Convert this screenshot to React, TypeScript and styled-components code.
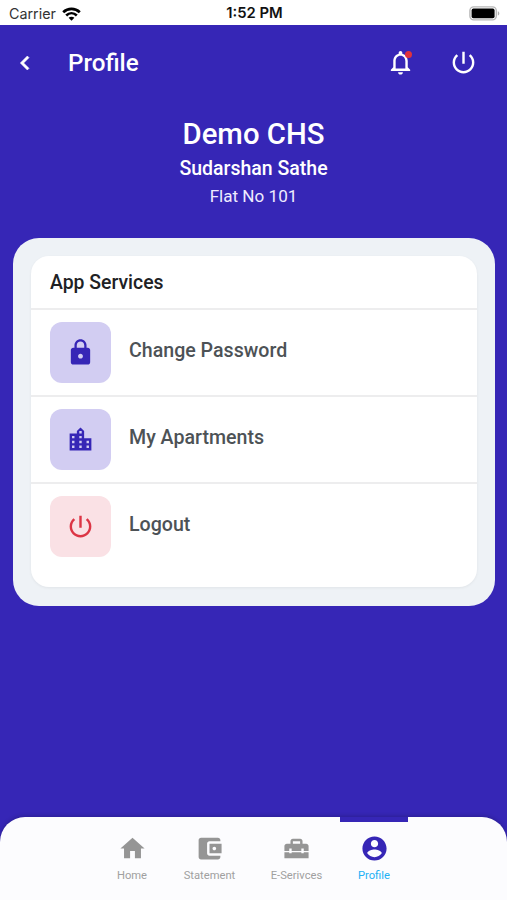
import React from "react";
import styled, { createGlobalStyle } from "styled-components";

const Global = createGlobalStyle`
  * { box-sizing: border-box; }
  body { margin: 0; background: #3626b6; font-family: Roboto, "Liberation Sans", sans-serif; }
`;

const Screen = styled.div`
  width: 507px;
  height: 900px;
  display: flex;
  flex-direction: column;
  background: #3626b6;
  overflow: hidden;
`;

const StatusBar = styled.div`
  height: 25px;
  flex: none;
  display: grid;
  grid-template-columns: 1fr auto 1fr;
  align-items: center;
  padding: 2px 7px 0 9px;
  background: #fff;
  color: #111;
  font-family: Inter, sans-serif;
  font-size: 14.3px;
  line-height: 23px;
`;

const Carrier = styled.div`
  display: flex;
  align-items: center;
  gap: 6px;
  color: #333;
`;

const Clock = styled.div`
  font-weight: 600;
  font-size: 14.8px;
`;

const BatterySlot = styled.div`
  display: flex;
  justify-content: flex-end;
`;

const Header = styled.header`
  height: 75px;
  flex: none;
  display: flex;
  align-items: center;
  padding: 0 29px 0 11px;
  color: #fff;
`;

const Title = styled.h1`
  flex: 1;
  margin: 0 0 0 29px;
  font-size: 24.2px;
  font-weight: 500;
`;

const BellButton = styled.div`
  position: relative;
  display: flex;
  margin-right: 34px;
`;

const Badge = styled.span`
  position: absolute;
  top: 3px;
  right: 3px;
  width: 7px;
  height: 7px;
  border-radius: 50%;
  background: #e0323c;
`;

const Identity = styled.section`
  height: 138px;
  flex: none;
  display: flex;
  flex-direction: column;
  align-items: center;
  padding-top: 14px;
  color: #fff;
`;

const Society = styled.div`
  font-size: 29.3px;
  line-height: 40px;
  font-weight: 500;
`;

const Person = styled.div`
  font-size: 19.5px;
  line-height: 29px;
  font-weight: 500;
`;

const Flat = styled.div`
  font-size: 17.1px;
  line-height: 26px;
  color: #eeecff;
`;

const Panel = styled.section`
  height: 368px;
  flex: none;
  margin: 0 12px 0 13px;
  padding: 18px;
  border-radius: 26px;
  background: #eef2f6;
`;

const Card = styled.div`
  height: 331px;
  border-radius: 18px;
  background: #fff;
  box-shadow: 0 1px 3px rgba(0, 0, 0, 0.06);
`;

const CardTitle = styled.h2`
  height: 52px;
  margin: 0;
  padding-left: 19px;
  font-size: 19.4px;
  line-height: 54px;
  font-weight: 500;
  color: #202124;
`;

const Row = styled.div`
  height: 87px;
  display: flex;
  align-items: flex-start;
  padding: 12px 19px 0;
  border-top: 2px solid #ededee;
`;

const Tile = styled.div<{ $bg: string; $fg: string }>`
  width: 61px;
  height: 61px;
  display: flex;
  align-items: center;
  justify-content: center;
  border-radius: 12px;
  background: ${(p) => p.$bg};
  color: ${(p) => p.$fg};
`;

const RowLabel = styled.div`
  margin-left: 18px;
  font-size: 19.6px;
  line-height: 57px;
  font-weight: 500;
  color: #4d5256;
`;

const TabBar = styled.nav`
  height: 83px;
  flex: none;
  display: flex;
  justify-content: center;
  margin-top: auto;
  padding: 0 12px 0 11px;
  border-radius: 25px 25px 0 0;
  background: #fcfcfe;
  box-shadow: 0 -1px 4px rgba(0, 0, 0, 0.2);
`;

const Tab = styled.div<{ $width: number; $active?: boolean }>`
  width: ${(p) => p.$width}px;
  display: flex;
  flex-direction: column;
  align-items: center;
  border-top: 5px solid ${(p) => (p.$active ? "#3626b6" : "transparent")};
  padding-top: 12px;
  color: ${(p) => (p.$active ? "#3626b6" : "#959595")};
`;

const TabLabel = styled.span<{ $active?: boolean }>`
  margin-top: 5px;
  font-size: 11.2px;
  line-height: 16px;
  color: ${(p) => (p.$active ? "#22b1f5" : "#a0a0a0")};
`;

const paths = {
  back: "M15.41 7.41 14 6l-6 6 6 6 1.41-1.41L10.83 12z",
  bell: "M12 22c1.1 0 2-.9 2-2h-4c0 1.1.9 2 2 2zm6-6v-5c0-3.07-1.63-5.64-4.5-6.32V4c0-.83-.67-1.5-1.5-1.5s-1.5.67-1.5 1.5v.68C7.64 5.36 6 7.92 6 11v5l-2 2v1h16v-1l-2-2zm-2 1H8v-6c0-2.48 1.51-4.5 4-4.5s4 2.02 4 4.5v6z",
  power: "M13 3h-2v10h2V3zm4.83 2.17-1.42 1.42C17.99 7.86 19 9.81 19 12c0 3.87-3.13 7-7 7s-7-3.13-7-7c0-2.19 1.01-4.14 2.58-5.42L6.17 5.17C4.23 6.82 3 9.26 3 12c0 4.97 4.03 9 9 9s9-4.03 9-9c0-2.74-1.23-5.18-3.17-6.83z",
  lock: "M18 8h-1V6c0-2.76-2.24-5-5-5S7 3.24 7 6v2H6c-1.1 0-2 .9-2 2v10c0 1.1.9 2 2 2h12c1.1 0 2-.9 2-2V10c0-1.1-.9-2-2-2zm-6 9c-1.1 0-2-.9-2-2s.9-2 2-2 2 .9 2 2-.9 2-2 2zm3.1-9H8.9V6c0-1.71 1.39-3.1 3.1-3.1s3.1 1.39 3.1 3.1v2z",
  city: "M15 11V5l-3-3-3 3v2H3v14h18V11h-6zm-8 8H5v-2h2v2zm0-4H5v-2h2v2zm0-4H5V9h2v2zm6 8h-2v-2h2v2zm0-4h-2v-2h2v2zm0-4h-2V9h2v2zm0-4h-2V5h2v2zm6 12h-2v-2h2v2zm0-4h-2v-2h2v2z",
  home: "M10 20v-6h4v6h5v-8h3L12 3 2 12h3v8z",
  wallet: "M21 18v1c0 1.1-.9 2-2 2H5c-1.11 0-2-.9-2-2V5c0-1.1.89-2 2-2h14c1.1 0 2 .9 2 2v1h-9c-1.11 0-2 .9-2 2v8c0 1.1.89 2 2 2h9zm-9-2h10V8H12v8zm4-2.5c-.83 0-1.5-.67-1.5-1.5s.67-1.5 1.5-1.5 1.5.67 1.5 1.5-.67 1.5-1.5 1.5z",
  toolbox: "M18 16H16V15H8V16H6V15H2V20H22V15H18V16M20 8H17V6C17 4.9 16.1 4 15 4H9C7.9 4 7 4.9 7 6V8H4C2.9 8 2 8.9 2 10V14H6V12H8V14H16V12H18V14H22V10C22 8.9 21.1 8 20 8M15 8H9V6H15V8Z",
  account: "M12 2C6.48 2 2 6.48 2 12s4.48 10 10 10 10-4.48 10-10S17.52 2 12 2zm0 3c1.66 0 3 1.34 3 3s-1.34 3-3 3-3-1.34-3-3 1.34-3 3-3zm0 14.2c-2.5 0-4.71-1.28-6-3.22.03-1.99 4-3.08 6-3.08 1.99 0 5.97 1.09 6 3.08-1.29 1.94-3.5 3.22-6 3.22z",
};

type IconName = keyof typeof paths;

const Icon = ({ name, size, stroke = 0 }: { name: IconName; size: number; stroke?: number }) => (
  <svg
    width={size}
    height={size}
    viewBox="0 0 24 24"
    fill="currentColor"
    stroke="currentColor"
    strokeWidth={stroke}
    aria-hidden="true"
  >
    <path d={paths[name]} />
  </svg>
);

const Wifi = () => (
  <svg width="19" height="14" viewBox="0 0 19 14" fill="none" stroke="#000" strokeWidth="2.7">
    <path d="M1.2 5.2C5.9.7 13.1.7 17.8 5.2" />
    <path d="M4.2 8.4c3.1-2.9 7.5-2.9 10.6 0" />
    <path d="M6.6 10.8c1.6-1.4 4.2-1.4 5.8 0L9.5 13.8z" fill="#000" stroke="none" />
  </svg>
);

const Battery = () => (
  <svg width="31" height="15" viewBox="0 0 31 15">
    <rect x="0.9" y="0.9" width="26.4" height="13" rx="3.8" fill="#fff" stroke="#b8b8b8" strokeWidth="1.4" />
    <rect x="2.6" y="2.6" width="23" height="9.6" rx="1.8" fill="#000" />
    <path d="M28.8 5.2c2 .7 2 3.7 0 4.4z" fill="#b0b0b0" />
  </svg>
);

const services: { label: string; icon: IconName; size: number; bg: string; fg: string }[] = [
  { label: "Change Password", icon: "lock", size: 29, bg: "#d2cdf2", fg: "#3626b6" },
  { label: "My Apartments", icon: "city", size: 29, bg: "#d2cdf2", fg: "#3626b6" },
  { label: "Logout", icon: "power", size: 29, bg: "#fae1e5", fg: "#dc3545" },
];

const tabs: { label: string; icon: IconName; width: number; active?: boolean }[] = [
  { label: "Home", icon: "home", width: 68 },
  { label: "Statement", icon: "wallet", width: 87 },
  { label: "E-Serivces", icon: "toolbox", width: 87 },
  { label: "Profile", icon: "account", width: 68, active: true },
];

export default function App() {
  return (
    <>
      <Global />
      <Screen>
        <StatusBar>
          <Carrier>
            Carrier
            <Wifi />
          </Carrier>
          <Clock>1:52 PM</Clock>
          <BatterySlot>
            <Battery />
          </BatterySlot>
        </StatusBar>
        <Header>
          <Icon name="back" size={28} stroke={0.5} />
          <Title>Profile</Title>
          <BellButton>
            <Icon name="bell" size={29} />
            <Badge />
          </BellButton>
          <Icon name="power" size={29} />
        </Header>
        <Identity>
          <Society>Demo CHS</Society>
          <Person>Sudarshan Sathe</Person>
          <Flat>Flat No 101</Flat>
        </Identity>
        <Panel>
          <Card>
            <CardTitle>App Services</CardTitle>
            {services.map((s) => (
              <Row key={s.label}>
                <Tile $bg={s.bg} $fg={s.fg}>
                  <Icon name={s.icon} size={s.size} />
                </Tile>
                <RowLabel>{s.label}</RowLabel>
              </Row>
            ))}
          </Card>
        </Panel>
        <TabBar>
          {tabs.map((t) => (
            <Tab key={t.label} $width={t.width} $active={t.active}>
              <Icon name={t.icon} size={29} />
              <TabLabel $active={t.active}>{t.label}</TabLabel>
            </Tab>
          ))}
        </TabBar>
      </Screen>
    </>
  );
}
